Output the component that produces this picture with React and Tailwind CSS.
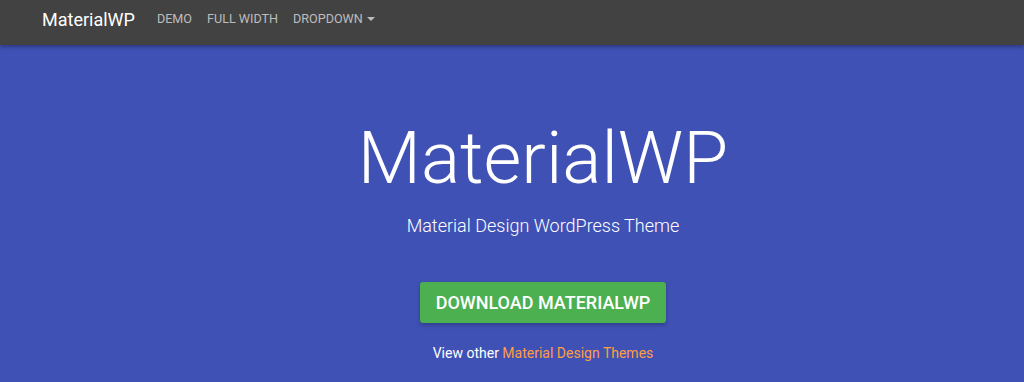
import React from 'react';

const App = () => {
  return (
    <div className="h-[382px] bg-[#3f51b5] font-['Roboto',sans-serif] overflow-hidden">
      {/* navbar */}
      <nav className="h-[45px] bg-[#424242] shadow-[0_2px_4px_rgba(0,0,0,0.3)] flex items-center pl-[42px]">
        <span className="text-white text-[18px] mr-[22px] pb-[6px]">MaterialWP</span>
        <div className="flex items-center gap-[15px] text-[12.6px] text-[#bdbdbd] pb-[6px]">
          <span>DEMO</span>
          <span>FULL WIDTH</span>
          <span className="flex items-center gap-1">
            DROPDOWN
            <span className="border-x-4 border-x-transparent border-t-4 border-t-[#bdbdbd] w-0 h-0" />
          </span>
        </div>
      </nav>

      {/* hero */}
      <div className="flex flex-col items-center text-white pl-[62px]">
        <h1 className="text-[73px] font-light leading-none mt-[77px]">MaterialWP</h1>
        <p className="text-[18px] font-light mt-[17px]">Material Design WordPress Theme</p>
        <button className="mt-[43px] h-[41px] px-4 bg-[#4caf50] rounded-[3px] text-[18px] font-medium text-white shadow-[0_2px_4px_rgba(0,0,0,0.25)]">
          DOWNLOAD MATERIALWP
        </button>
        <p className="text-[14px] mt-[20px]">
          View other <span className="text-[#ff9e40]">Material Design Themes</span>
        </p>
      </div>
    </div>
  );
};

export default App;
